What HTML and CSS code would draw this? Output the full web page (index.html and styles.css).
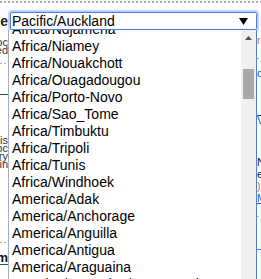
FILE: index.html
```html
<!DOCTYPE html>
<html lang="en">
<head>
    <meta charset="UTF-8">
    <meta name="viewport" content="width=device-width, initial-scale=1.0">
    <title>Settings | Time zone</title>
    <link rel="stylesheet" href="styles.css">
</head>
<body>
    <main class="page">
        <div class="dotted"></div>
        <div class="field">
            <div class="field-label"><span>Time zone</span></div>
            <div class="select">
                <span class="select-value">Pacific/Auckland</span>
                <svg class="select-arrow" width="9" height="7" viewBox="0 0 9 7"><path d="M0 0H9L4.5 7Z" fill="#000"/></svg>
            </div>
        </div>
        <div class="under">
            <div class="side side-left">
                <p class="frag small">Date proc</p>
                <p class="frag small">Selected</p>
                <p class="dash"></p>
                <p class="rule"></p>
                <p class="frag small gap-top">Use this</p>
                <p class="frag small">your loc</p>
                <p class="frag small">country</p>
                <p class="frag small">main</p>
                <p class="dash gap-bottom"></p>
                <p class="frag bold">Custom</p>
                <p class="rule"></p>
            </div>
            <div class="side side-right">
                <p class="frag orange">r</p>
                <p class="dash"></p>
                <p class="frag blue">d</p>
                <p class="rule gap-rule"></p>
                <p class="frag blue">V</p>
                <p class="frag dark gap-n">N</p>
                <p class="frag dark">e</p>
                <p class="frag orange">)</p>
                <p class="frag blue link">M</p>
                <p class="dash"></p>
                <p class="rule blue-rule"></p>
            </div>
        </div>
    </main>

    <div class="dropdown">
        <div class="options">
            <ul class="option-list">
                <li>Africa/Ndjamena</li>
                <li>Africa/Niamey</li>
                <li>Africa/Nouakchott</li>
                <li>Africa/Ouagadougou</li>
                <li>Africa/Porto-Novo</li>
                <li>Africa/Sao_Tome</li>
                <li>Africa/Timbuktu</li>
                <li>Africa/Tripoli</li>
                <li>Africa/Tunis</li>
                <li>Africa/Windhoek</li>
                <li>America/Adak</li>
                <li>America/Anchorage</li>
                <li>America/Anguilla</li>
                <li>America/Antigua</li>
                <li>America/Araguaina</li>
                <li>America/Argentina/Buenos_Aires</li>
            </ul>
        </div>
        <div class="scrollbar">
            <div class="scroll-up">
                <svg width="7" height="4" viewBox="0 0 7 4"><path d="M0 4H7L3.5 0Z" fill="#505050"/></svg>
            </div>
            <div class="thumb"></div>
        </div>
    </div>
</body>
</html>
```

FILE: styles.css
```css
:root{
    --sans: "Liberation Sans", Arial, sans-serif;
    --focus: hsl(218, 68%, 58%);
    --glow: hsl(222, 80%, 86%);
    --teal: hsl(200, 60%, 28%);
    --dots: hsl(0, 0%, 68%);
    --track: hsl(0, 0%, 94%);
    --thumb: hsl(0, 0%, 66%);
}
*,*::before,*::after{
    box-sizing: border-box;
    margin: 0;
    padding: 0;
}
body{
    width: 261px;
    height: 279px;
    overflow: hidden;
    position: relative;
    font-family: var(--sans);
    background-color: #fff;
    color: #111;
}
.dotted{
    height: 2px;
    margin-top: 1px;
    background: repeating-linear-gradient(90deg, var(--dots) 0 2px, transparent 2px 4px);
}
.field{
    display: flex;
    align-items: center;
    margin-top: 9px;
}
.field-label{
    width: 8px;
    overflow: hidden;
    display: flex;
    justify-content: flex-end;
    white-space: nowrap;
    font-size: 14px;
    font-weight: 700;
    color: #222;
}
.select{
    margin-left: 2px;
    width: 247px;
    height: 18px;
    border: 1px solid var(--focus);
    border-radius: 2px;
    box-shadow: 0 0 1px 2px var(--glow);
    display: flex;
    align-items: center;
    justify-content: space-between;
    padding: 0 8px 0 1px;
    font-size: 14px;
    color: #000;
}
.select-arrow{
    display: block;
}
.under{
    display: flex;
    justify-content: space-between;
}
.side{
    width: 4px;
    overflow: hidden;
    display: flex;
    flex-direction: column;
    white-space: nowrap;
}
.side-left{
    width: 8px;
    align-items: flex-end;
    padding-top: 8px;
}
.side-right{
    padding-top: 6px;
}
.frag{
    font-size: 11px;
    line-height: 8px;
    height: 8px;
}
.small{
    color: #333;
}
.bold{
    font-size: 13px;
    line-height: 12px;
    height: 12px;
    font-weight: 700;
    color: #111;
}
.dash{
    width: 40px;
    height: 1px;
    margin: 9px 0 0;
    background: repeating-linear-gradient(90deg, var(--dots) 0 2px, transparent 2px 4px);
}
.rule{
    width: 40px;
    height: 1px;
    margin-top: 30px;
    background-color: var(--teal);
}
.side-left .rule:last-child{
    margin-top: 0;
}
.gap-top{
    margin-top: 41px;
}
.gap-bottom{
    margin-top: 74px;
    margin-bottom: 9px;
}
.orange{
    color: hsl(30, 90%, 45%);
}
.blue{
    color: hsl(215, 70%, 40%);
}
.dark{
    color: #111;
}
.link{
    text-decoration: underline;
}
.gap-rule{
    margin-top: 34px;
}
.gap-n{
    margin-top: 30px;
}
.blue-rule{
    margin-top: 22px;
    background-color: var(--focus);
}
.side-right .frag{
    margin-bottom: 4px;
}
.side-right .dash{
    margin: 10px 0 10px;
}
.dropdown{
    position: absolute;
    left: 8px;
    top: 30px;
    width: 249px;
    height: 249px;
    display: flex;
    background-color: #fff;
    border-left: 1px solid hsl(218, 20%, 70%);
    border-right: 1px solid var(--focus);
    overflow: hidden;
}
.options{
    flex: 1;
    overflow: hidden;
}
.option-list{
    list-style: none;
    margin-top: -9px;
}
.option-list li{
    height: 17px;
    line-height: 17px;
    padding-left: 3px;
    font-size: 14px;
    color: #000;
    white-space: nowrap;
}
.scrollbar{
    width: 15px;
    background-color: var(--track);
    display: flex;
    flex-direction: column;
    align-items: center;
}
.scroll-up{
    height: 15px;
    display: flex;
    align-items: center;
    justify-content: center;
    padding-top: 1px;
}
.scroll-up svg{
    display: block;
}
.thumb{
    margin-top: 24px;
    width: 11px;
    height: 30px;
    background-color: var(--thumb);
}
```
